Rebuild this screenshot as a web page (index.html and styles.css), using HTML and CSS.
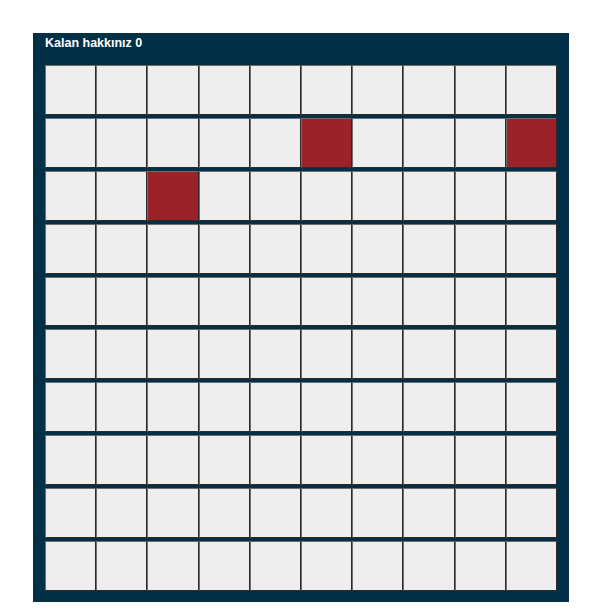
FILE: index.html
```html
<!DOCTYPE html>
<html lang="tr">
<head>
<meta charset="utf-8">
<title>Oyun</title>
<link rel="stylesheet" href="styles.css">
</head>
<body>
<div class="board">
  <div class="title">Kalan hakkınız 0</div>
  <div class="grid">
    <div class="cell"></div><div class="cell"></div><div class="cell"></div><div class="cell"></div><div class="cell"></div><div class="cell"></div><div class="cell"></div><div class="cell"></div><div class="cell"></div><div class="cell"></div>
    <div class="cell"></div><div class="cell"></div><div class="cell"></div><div class="cell"></div><div class="cell"></div><div class="cell hit"></div><div class="cell"></div><div class="cell"></div><div class="cell"></div><div class="cell hit"></div>
    <div class="cell"></div><div class="cell"></div><div class="cell hit"></div><div class="cell"></div><div class="cell"></div><div class="cell"></div><div class="cell"></div><div class="cell"></div><div class="cell"></div><div class="cell"></div>
    <div class="cell"></div><div class="cell"></div><div class="cell"></div><div class="cell"></div><div class="cell"></div><div class="cell"></div><div class="cell"></div><div class="cell"></div><div class="cell"></div><div class="cell"></div>
    <div class="cell"></div><div class="cell"></div><div class="cell"></div><div class="cell"></div><div class="cell"></div><div class="cell"></div><div class="cell"></div><div class="cell"></div><div class="cell"></div><div class="cell"></div>
    <div class="cell"></div><div class="cell"></div><div class="cell"></div><div class="cell"></div><div class="cell"></div><div class="cell"></div><div class="cell"></div><div class="cell"></div><div class="cell"></div><div class="cell"></div>
    <div class="cell"></div><div class="cell"></div><div class="cell"></div><div class="cell"></div><div class="cell"></div><div class="cell"></div><div class="cell"></div><div class="cell"></div><div class="cell"></div><div class="cell"></div>
    <div class="cell"></div><div class="cell"></div><div class="cell"></div><div class="cell"></div><div class="cell"></div><div class="cell"></div><div class="cell"></div><div class="cell"></div><div class="cell"></div><div class="cell"></div>
    <div class="cell"></div><div class="cell"></div><div class="cell"></div><div class="cell"></div><div class="cell"></div><div class="cell"></div><div class="cell"></div><div class="cell"></div><div class="cell"></div><div class="cell"></div>
    <div class="cell"></div><div class="cell"></div><div class="cell"></div><div class="cell"></div><div class="cell"></div><div class="cell"></div><div class="cell"></div><div class="cell"></div><div class="cell"></div><div class="cell"></div>
  </div>
</div>
</body>
</html>
```

FILE: styles.css
```css
html, body {
  margin: 0;
  padding: 0;
  background: #ffffff;
}

.board {
  margin: 33px 0 0 33px;
  width: 536px;
  box-sizing: border-box;
  background: #023047;
  padding: 3px 12px 11px 12px;
}

.title {
  font-family: "Liberation Sans", Arial, sans-serif;
  font-weight: bold;
  font-size: 12.5px;
  line-height: 14px;
  color: #ffffff;
  height: 29px;
}

.grid {
  display: grid;
  grid-template-columns: repeat(10, 1fr);
  row-gap: 3px;
  column-gap: 0;
}

.cell {
  height: 49.9px;
  box-sizing: border-box;
  background: #eeeeee;
  border: 1px solid;
  border-color: #6e6e6e #2a2a2a #2a2a2a #6e6e6e;
}

.cell.hit {
  background: #9b2227;
}
```
